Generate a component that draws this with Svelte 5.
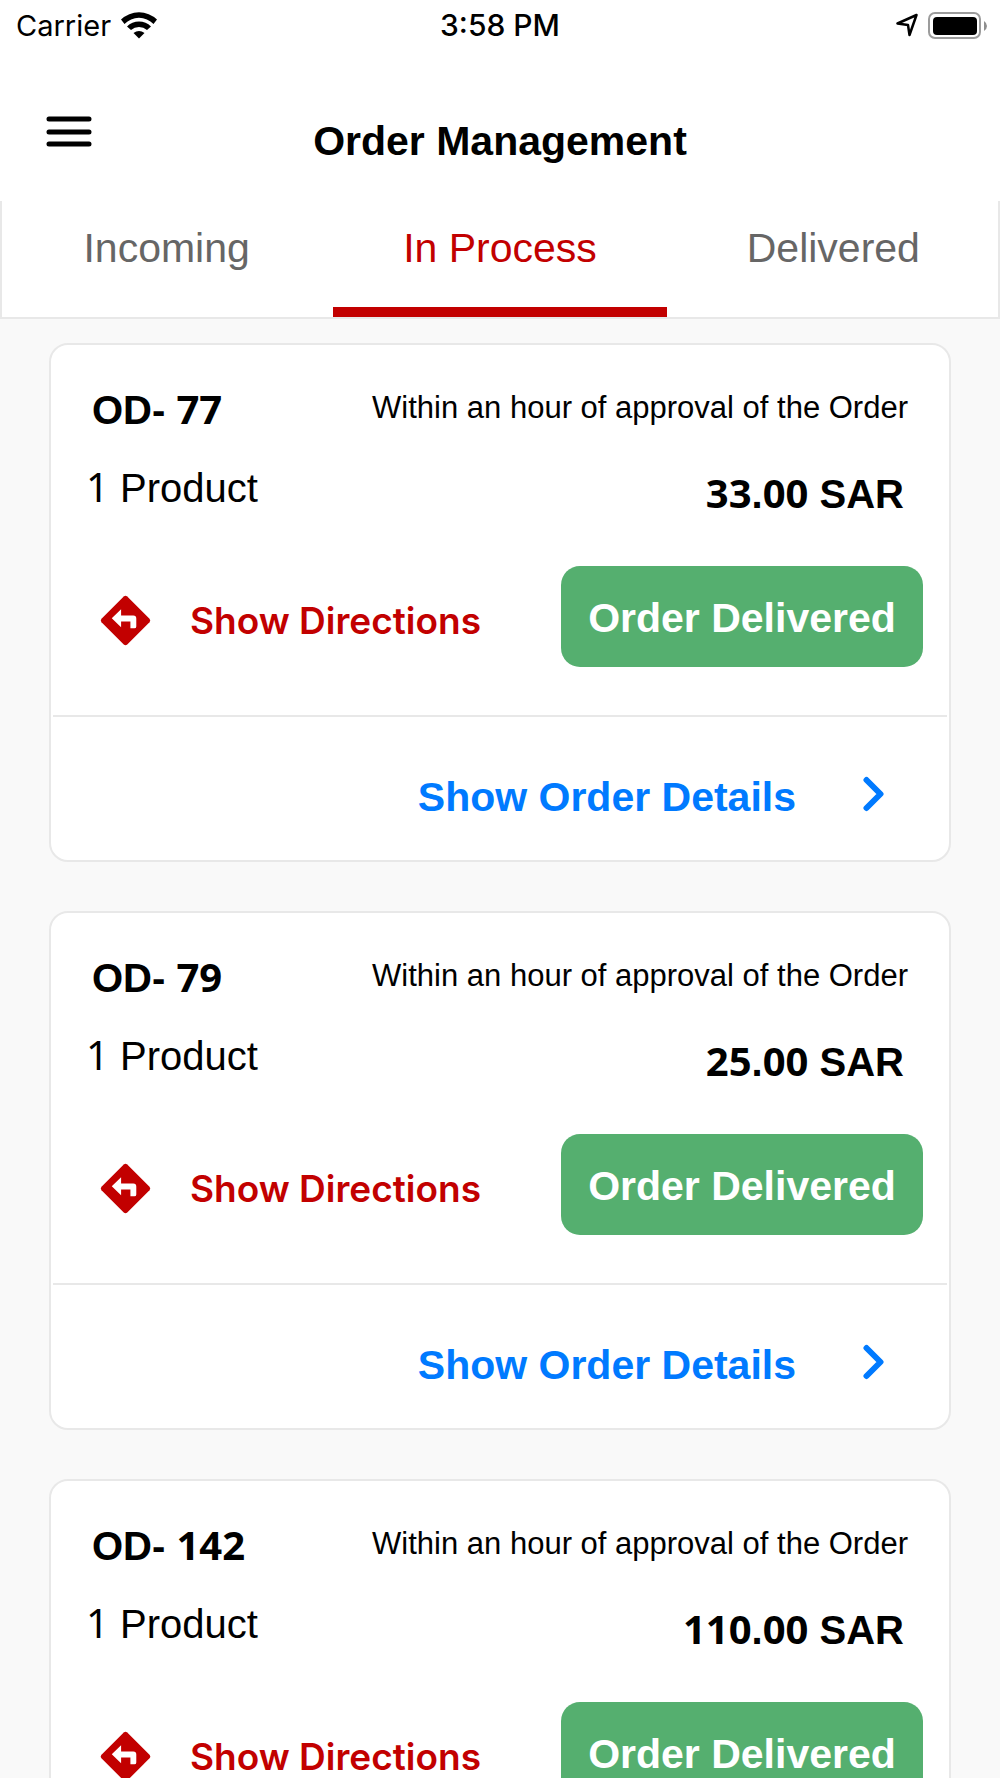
<script lang="ts">
	const tabs = ['Incoming', 'In Process', 'Delivered'];
	let activeTab = $state('In Process');

	const orders = [
		{ id: '77', products: 1, whole: '33', cents: '00' },
		{ id: '79', products: 1, whole: '25', cents: '00' },
		{ id: '142', products: 1, whole: '110', cents: '00' }
	];
</script>

<div class="screen">
	<div class="statusBar">
		<div class="carrier">
			<span>Carrier</span>
			<svg width="36" height="27" viewBox="0 0 36 27" aria-hidden="true">
				<path d="M0 7.500A26 26 0 0 1 36 7.500L32.500 12A20 20 0 0 0 3.500 12Z" />
				<path d="M6 14.500A17 17 0 0 1 30 14.500L26 18A12 12 0 0 0 10 18Z" />
				<path d="M12.500 21A9 9 0 0 1 23.500 21L18 26.500Z" />
			</svg>
		</div>
		<span class="time">3:58 PM</span>
		<div class="indicators">
			<svg width="22" height="24" viewBox="0 0 22 24" aria-hidden="true">
				<path class="location" d="M20.500 2L1.500 10.500L12 12L13.500 22Z" />
			</svg>
			<svg width="60" height="27" viewBox="0 0 60 27" aria-hidden="true">
				<rect class="shell" x="1" y="1" width="51" height="25" rx="6" />
				<rect x="5" y="5" width="44" height="18" rx="4" />
				<path class="tip" d="M56 9Q59 11 59 14Q59 17 56 19Z" />
			</svg>
		</div>
	</div>

	<header>
		<button class="menu" aria-label="Menu">
			<svg width="46" height="32" viewBox="0 0 46 32" aria-hidden="true">
				<path d="M3 3H43M3 16H43M3 28H43" />
			</svg>
		</button>
		<h1>Order Management</h1>
	</header>

	<nav>
		{#each tabs as tab}
			<button class="tab" class:active={tab === activeTab} onclick={() => (activeTab = tab)}>{tab}</button>
		{/each}
	</nav>

	<main>
		{#each orders as order}
			<article>
				<div class="summary">
					<div class="row">
						<h2>OD- <span class="digits">{order.id}</span></h2>
						<p class="note">Within an hour of approval of the Order</p>
					</div>
					<div class="row priceRow">
						<p class="products"><span class="digits">{order.products}</span> Product</p>
						<p class="price"><span class="digits">{order.whole}</span>.<span class="digits">{order.cents}</span> SAR</p>
					</div>
					<div class="row actions">
						<a class="directions" href="#directions">
							<svg width="51" height="51" viewBox="0 0 52 52" aria-hidden="true">
								<path d="M24.200 1.500Q26 0 27.800 1.500L50.500 24.200Q52 26 50.500 27.800L27.800 50.500Q26 52 24.200 50.500L1.500 27.800Q0 26 1.500 24.200L24.200 1.500Z" />
								<path class="arrow" d="M21.500 14.500V21H34Q37 21 37 24V32Q37 34 35 34H31V27H21.500V33L12 23.700Z" />
							</svg>
							Show Directions
						</a>
						<button class="delivered">Order Delivered</button>
					</div>
				</div>
				<a class="details" href="#details">
					<span>Show Order Details</span>
					<svg width="22" height="36" viewBox="0 0 22 36" aria-hidden="true">
						<path d="M3.500 4L17.500 18L3.500 32" />
					</svg>
				</a>
			</article>
		{/each}
	</main>
</div>

<style>
	:global(body) {
		margin: 0;
		background: #f9f9f9;
	}
	.screen {
		font-family: 'Liberation Sans', Arial, sans-serif;
		font-size: 41px;
		color: #000;
		height: 100vh;
		overflow: hidden;
	}
	h1,
	h2,
	p {
		margin: 0;
		font-size: 40px;
		line-height: 48px;
	}
	button {
		font-family: inherit;
		font-size: 41px;
		border: 0;
		padding: 0;
		background: none;
		cursor: pointer;
	}
	a {
		text-decoration: none;
	}
	svg {
		display: block;
		flex: none;
	}
	.statusBar {
		display: grid;
		grid-template-columns: 1fr auto 1fr;
		height: 50px;
		padding: 0 12px 0 16px;
		background: #fff;
		font-family: Inter, sans-serif;
		font-size: 29px;
		align-items: center;
	}
	.carrier,
	.indicators {
		display: flex;
		align-items: center;
		gap: 10px;
	}
	.indicators {
		justify-content: flex-end;
	}
	.time {
		font-size: 30px;
		font-weight: 500;
		padding-right: 4px;
	}
	.location {
		fill: none;
		stroke: #000;
		stroke-width: 2.5;
		stroke-linejoin: round;
	}
	.shell {
		fill: none;
		stroke: #9c9c9c;
		stroke-width: 2;
	}
	.tip {
		fill: #8e8e8e;
	}
	header {
		display: grid;
		grid-template-columns: 1fr auto 1fr;
		height: 151px;
		padding: 0 46px;
		background: #fff;
		align-items: start;
	}
	.menu {
		justify-self: start;
		padding-top: 66px;
	}
	.menu path {
		stroke: #000;
		stroke-width: 5;
		stroke-linecap: round;
	}
	h1 {
		font-size: 41px;
		padding-top: 67px;
	}
	nav {
		display: grid;
		grid-template-columns: repeat(3, 1fr);
		height: 116px;
		background: #fff;
		box-shadow:
			inset 2px 0 #e8e8e8,
			inset -2px 0 #e8e8e8;
		border-bottom: 2px solid #e8e8e8;
	}
	.tab {
		color: #666;
		border-bottom: 10px solid transparent;
		padding-bottom: 12px;
	}
	.tab.active {
		color: #c20000;
		border-bottom-color: #c20000;
	}
	main {
		display: flex;
		flex-direction: column;
		gap: 49px;
		padding: 24px 49px;
	}
	article {
		background: #fff;
		border: 2px solid #e8e8e8;
		border-radius: 19px;
	}
	.summary {
		padding: 41px 24px 48px 33px;
		border-bottom: 2px solid #e8e8e8;
		margin: 0 2px;
	}
	.row {
		display: flex;
		justify-content: space-between;
	}
	h2 {
		padding-left: 6px;
	}
	/* numbers are set in a different face than the words */
	.digits {
		font-family: 'Noto Sans', sans-serif;
		line-height: 40px;
	}
	.note {
		font-size: 31px;
		line-height: 44px;
		padding-right: 15px;
	}
	.priceRow {
		padding-top: 30px;
	}
	.price {
		font-weight: bold;
		padding: 6px 19px 0 0;
	}
	.actions {
		padding-top: 48px;
	}
	.directions {
		display: flex;
		align-items: center;
		gap: 39px;
		padding: 8px 0 0 14px;
		color: #c20000;
		fill: #c20000;
		font: 600 37px/48px Inter, sans-serif;
	}
	.arrow {
		fill: #fff;
	}
	.delivered {
		width: 362px;
		height: 101px;
		padding-top: 4px;
		border-radius: 19px;
		background: #55af6f;
		color: #fff;
		font-weight: bold;
	}
	.details {
		display: flex;
		justify-content: flex-end;
		align-items: center;
		gap: 67px;
		height: 133px;
		padding: 10px 64px 0 0;
		color: #007aff;
		font-weight: bold;
	}
	.details span {
		padding-top: 8px;
	}
	.details path {
		fill: none;
		stroke: #007aff;
		stroke-width: 6;
		stroke-linecap: round;
		stroke-linejoin: round;
	}
</style>
